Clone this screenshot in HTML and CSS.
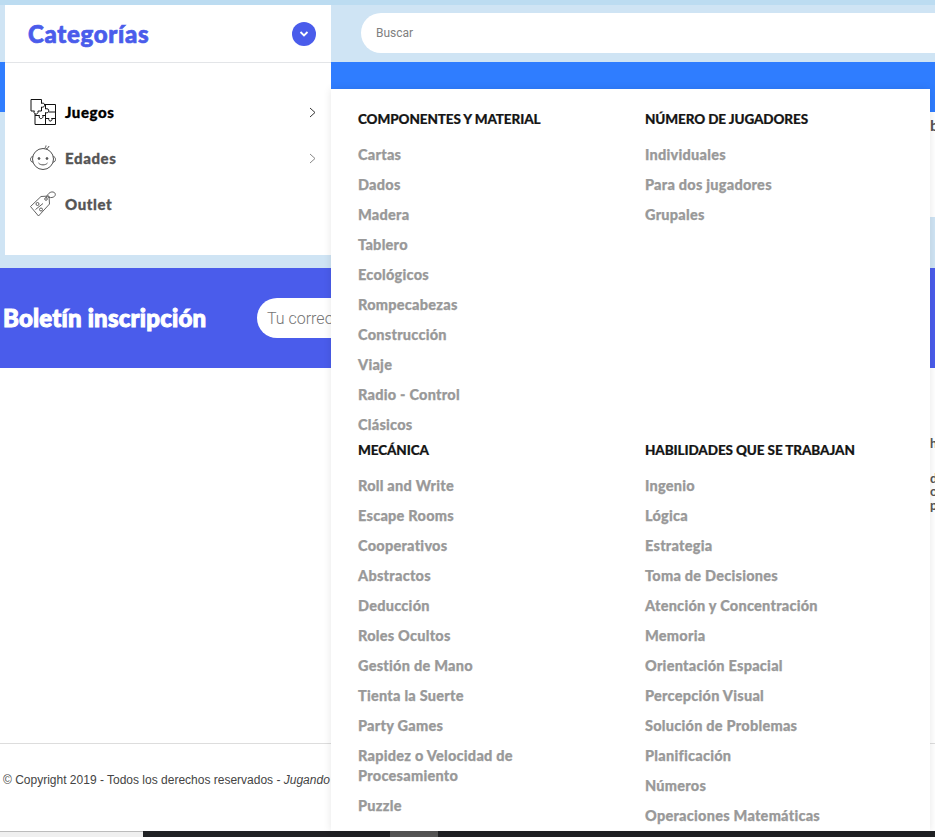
FILE: index.html
```html
<!DOCTYPE html>
<html lang="es">
<head>
<meta charset="utf-8">
<title>Categorías</title>
<link rel="stylesheet" href="styles.css">
</head>
<body>
<div class="page">
  <header class="topbar">
    <div class="search"><span class="search-text">Buscar</span></div>
  </header>
  <div class="navbar"></div>
  <section class="hero">
    <div class="hero-side"></div>
    <div class="hero-main"><span class="hero-text">b</span></div>
  </section>
  <div class="strip"></div>
  <section class="newsletter">
    <h2 class="news-title">Boletín inscripción</h2>
    <div class="news-input"><span class="news-placeholder">Tu correo</span></div>
  </section>
  <main class="content">
    <div class="content-text">
      <span class="frag frag-a">hi</span>
      <span class="frag">d</span>
      <span class="frag">o</span>
      <span class="frag">p</span>
    </div>
  </main>
  <footer class="footer">
    <p class="copy">© Copyright 2019 - Todos los derechos reservados - <em>Jugando</em></p>
  </footer>
  <div class="bottombar">
    <div class="bb-left"></div>
    <div class="bb-dark"><div class="bb-thumb"></div></div>
  </div>

  <aside class="cat-panel">
    <div class="cat-head">
      <span class="cat-title">Categorías</span>
      <span class="cat-toggle">
        <svg width="10" height="8" viewBox="0 0 10 8"><path d="M1.500 2 5 5.500 8.500 2" fill="none" stroke="#fff" stroke-width="1.800"/></svg>
      </span>
    </div>
    <ul class="cat-list">
      <li class="cat-item active">
        <svg class="cat-icon" width="26" height="26" viewBox="0 0 26 26" fill="none" stroke="#111" stroke-width="1">
          <path d="M5 14.500V25.500H25.500V5.500H14"/>
          <path d="M1 .5H11.500V4.500C13.500 3.500 15.500 5 14.500 7 14 8 12.500 8.500 11.500 8V12H8C8.500 14 7 15.500 5.500 15 4 14.500 3.500 13 4.500 12H1Z"/>
          <path d="M15.500 5.500V10C17.500 9 19.500 10.500 18.500 12.500 18 14 16.500 14 15.500 13.500V25.500"/>
          <path d="M5 16.500H9.500C8.500 18.500 10 20 11.500 19.500 13 19 13.500 17.500 12.500 16.500H15.500"/>
          <path d="M18.500 13H25.500"/>
          <path d="M15.500 19.500H19C18.200 21 19.500 22.500 21 22 22 21.500 22.500 20 21.500 19.500H25.500"/>
        </svg>
        <span class="cat-label">Juegos</span>
        <svg class="cat-chev" width="7" height="11" viewBox="0 0 7 11"><path d="M1 1 6 5.500 1 10" fill="none" stroke="currentColor" stroke-width="1"/></svg>
      </li>
      <li class="cat-item">
        <svg class="cat-icon icon-soft" width="26" height="26" viewBox="0 0 26 26" fill="none" stroke="#333" stroke-width="1">
          <circle cx="13" cy="14" r="10.500"/>
          <path d="M2.700 11.500C1 12 .5 13 .5 14.500S1.500 17 3 17.200M23.300 11.500C25 12 25.500 13 25.500 14.500S24.500 17 23 17.200"/>
          <path d="M14.500 3.500C15.500 2.500 16 1.500 16 .5M16 4C17.500 3.500 18.500 2.500 19 1"/>
          <path d="M8.500 18C10.500 20.500 15.500 20.500 17.500 18"/>
          <circle cx="9" cy="13.500" r=".9" fill="#333"/>
          <circle cx="17" cy="13.500" r=".9" fill="#333"/>
        </svg>
        <span class="cat-label">Edades</span>
        <svg class="cat-chev chev-soft" width="7" height="11" viewBox="0 0 7 11"><path d="M1 1 6 5.500 1 10" fill="none" stroke="currentColor" stroke-width="1"/></svg>
      </li>
      <li class="cat-item">
        <svg class="cat-icon icon-soft" width="26" height="26" viewBox="0 0 26 26" fill="none" stroke="#333" stroke-width=".9">
          <path d="M.5 15.500 11 5.500 19 5 19.500 13 8.500 25Z"/>
          <circle cx="16" cy="8" r="1.300"/>
          <path d="M16 7C17.500 3 20 .5 23 1 26 1.500 26 5 23.500 6 21.500 7 19.500 6.500 17.500 6"/>
          <circle cx="7.500" cy="13" r="1.500"/>
          <circle cx="11" cy="18.500" r="1.500"/>
          <path d="M5.500 18.500 13 12.500"/>
        </svg>
        <span class="cat-label">Outlet</span>
      </li>
    </ul>
  </aside>

  <nav class="mega">
    <div class="mega-col">
      <h3 class="mega-head">COMPONENTES Y MATERIAL</h3>
      <ul class="mega-list">
        <li>Cartas</li><li>Dados</li><li>Madera</li><li>Tablero</li><li>Ecológicos</li><li>Rompecabezas</li><li>Construcción</li><li>Viaje</li><li>Radio - Control</li><li>Clásicos</li>
      </ul>
    </div>
    <div class="mega-col">
      <h3 class="mega-head">NÚMERO DE JUGADORES</h3>
      <ul class="mega-list">
        <li>Individuales</li><li>Para dos jugadores</li><li>Grupales</li>
      </ul>
    </div>
    <div class="mega-col">
      <h3 class="mega-head">MECÁNICA</h3>
      <ul class="mega-list">
        <li>Roll and Write</li><li>Escape Rooms</li><li>Cooperativos</li><li>Abstractos</li><li>Deducción</li><li>Roles Ocultos</li><li>Gestión de Mano</li><li>Tienta la Suerte</li><li>Party Games</li><li>Rapidez o Velocidad de Procesamiento</li><li>Puzzle</li>
      </ul>
    </div>
    <div class="mega-col">
      <h3 class="mega-head">HABILIDADES QUE SE TRABAJAN</h3>
      <ul class="mega-list">
        <li>Ingenio</li><li>Lógica</li><li>Estrategia</li><li>Toma de Decisiones</li><li>Atención y Concentración</li><li>Memoria</li><li>Orientación Espacial</li><li>Percepción Visual</li><li>Solución de Problemas</li><li>Planificación</li><li>Números</li><li>Operaciones Matemáticas</li>
      </ul>
    </div>
  </nav>
</div>
</body>
</html>
```
FILE: styles.css
```css
* { box-sizing: border-box; }
html, body { margin: 0; padding: 0; }
body { font-family: "Lato", "Liberation Sans", sans-serif; background: #fff; }
ul { list-style: none; margin: 0; padding: 0; }
h2, h3, p { margin: 0; }

.page { position: relative; width: 935px; height: 837px; overflow: hidden; display: flex; flex-direction: column; }

.topbar { height: 62px; flex: none; background: #cfe4f4; border-top: 5px solid #bcdcf1; padding: 8px 0 0 361px; }
.search { height: 40px; background: #fff; border-radius: 20px 0 0 20px; padding-left: 15px; display: flex; align-items: center; }
.search-text { font-family: "Roboto", sans-serif; font-size: 12px; color: #808080; }

.navbar { height: 50px; flex: none; background: #2f7dff; }

.hero { height: 105px; flex: none; display: flex; }
.hero-side { width: 331px; background: #cfe4f4; }
.hero-main { flex: 1; background: #fff; display: flex; justify-content: flex-end; padding-top: 4px; }
.hero-text { font-size: 16px; font-weight: 700; color: #555; line-height: 18px; width: 5px; overflow: hidden; }

.strip { height: 51px; flex: none; background: #cfe4f4; }

.newsletter { height: 100px; flex: none; background: #4a5ceb; display: flex; align-items: center; padding-left: 3px; gap: 50px; }
.news-title { font-size: 24px; font-weight: 900; color: #fff; line-height: 30px; width: 204px; white-space: nowrap; letter-spacing: .2px; -webkit-text-stroke: 1px #fff; }
.news-input { width: 74px; height: 40px; background: #fff; border-radius: 20px 0 0 20px; padding-left: 10px; display: flex; align-items: center; overflow: hidden; }
.news-placeholder { font-family: "Roboto", sans-serif; font-size: 16px; font-weight: 300; color: #757575; white-space: nowrap; }

.content { height: 375px; flex: none; background: #fff; }
.content-text { display: flex; flex-direction: column; align-items: flex-start; padding: 69px 0 0 930px; font-size: 13px; font-weight: 700; color: #555; line-height: 13.500px; }
.frag { display: block; width: 5px; overflow: hidden; }
.frag-a { margin-bottom: 21px; }

.footer { height: 88px; flex: none; border-top: 1px solid #ddd; background: #fff; padding: 28px 0 0 3px; }
.copy { font-family: "Liberation Sans", sans-serif; font-size: 12px; line-height: 16px; color: #444; white-space: nowrap; }

.bottombar { height: 6px; flex: none; display: flex; }
.bb-left { width: 143px; background: #efefef; border-top: 1px solid #bbb; }
.bb-dark { flex: 1; background: #202124; padding-left: 247px; }
.bb-thumb { width: 48px; height: 100%; background: #555; }

.cat-panel { position: absolute; left: 5px; top: 5px; width: 326px; height: 250px; background: #fff; }
.cat-head { height: 58px; border-bottom: 1px solid #e3e5e8; display: flex; align-items: center; justify-content: space-between; padding: 0 15px 0 23px; }
.cat-title { font-size: 24px; font-weight: 900; color: #4a5ceb; line-height: 30px; letter-spacing: .7px; -webkit-text-stroke: .7px #4a5ceb; }
.cat-toggle { width: 24px; height: 24px; border-radius: 50%; background: #4a5ceb; display: flex; align-items: center; justify-content: center; }
.cat-list { padding-top: 26px; }
.cat-item { height: 46px; display: flex; align-items: center; padding: 0 15px 0 25px; color: #555; }
.cat-item.active { color: #000; }
.cat-icon { flex: none; margin-right: 9px; }
.icon-soft { opacity: .85; }
.cat-label { flex: 1; font-size: 15px; font-weight: 900; line-height: 20px; letter-spacing: .6px; -webkit-text-stroke: .3px currentColor; }
.cat-chev { flex: none; color: #333; }
.chev-soft { color: #888; }

.mega { position: absolute; left: 331px; top: 89px; width: 599px; height: 742px; background: #fff; box-shadow: 0 0 8px rgba(0, 0, 0, .1); padding: 20px 0 0 27px; display: grid; grid-template-columns: 287px 285px; align-content: start; overflow: hidden; }
.mega-col { padding-right: 45px; }
.mega-head { font-size: 13.500px; font-weight: 900; color: #151515; line-height: 20px; margin-bottom: 16px; white-space: nowrap; letter-spacing: -.1px; -webkit-text-stroke: .2px #151515; }
.mega-list li { font-size: 14.500px; font-weight: 900; color: #999; line-height: 20px; margin-bottom: 10px; letter-spacing: .25px; -webkit-text-stroke: .25px #999; }
.mega-col:nth-child(1) .mega-list li:last-child { margin-bottom: 5px; }
```
